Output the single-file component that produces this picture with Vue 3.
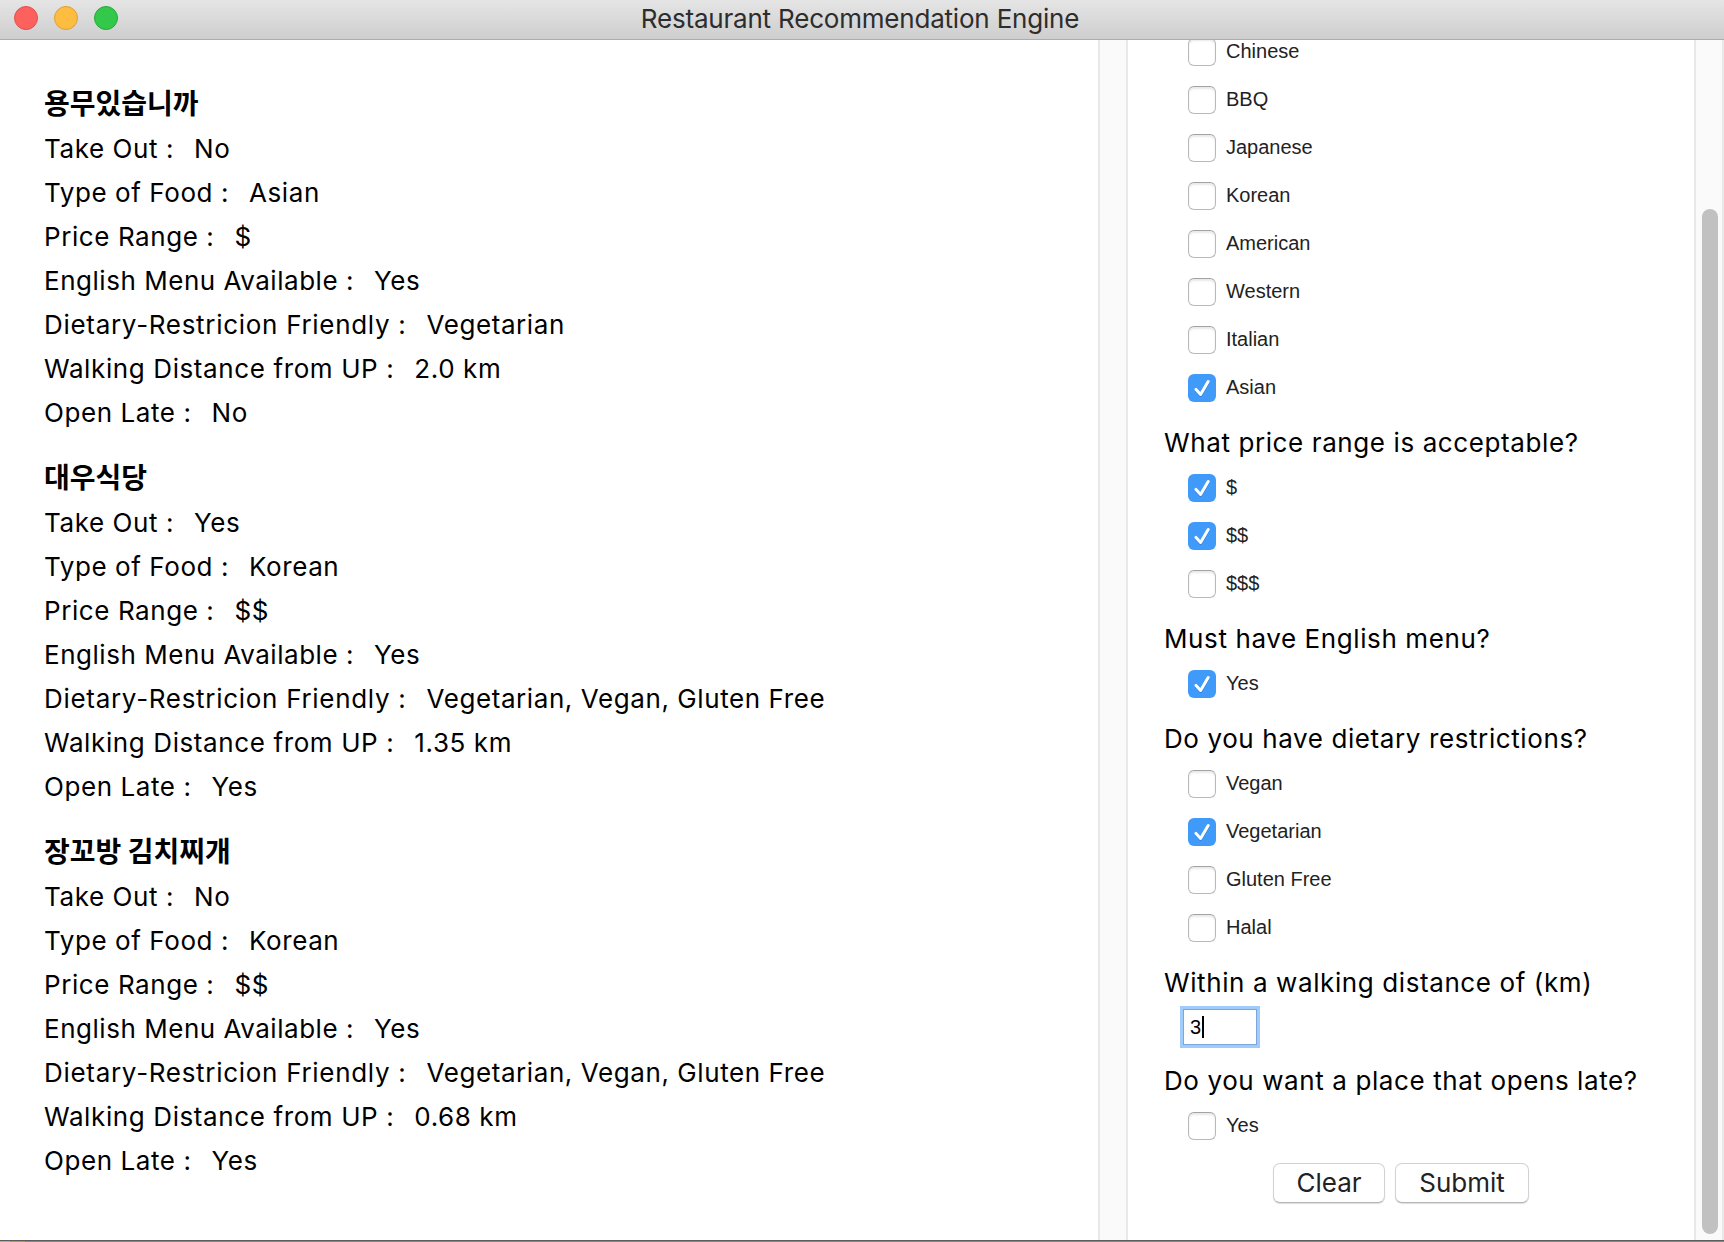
<script setup>
import { ref } from 'vue'

const restaurants = [
  {
    name: '용무있습니까',
    facts: [
      ['Take Out :', 'No'],
      ['Type of Food :', 'Asian'],
      ['Price Range :', '$'],
      ['English Menu Available :', 'Yes'],
      ['Dietary-Restricion Friendly :', 'Vegetarian'],
      ['Walking Distance from UP :', '2.0 km'],
      ['Open Late :', 'No'],
    ],
  },
  {
    name: '대우식당',
    facts: [
      ['Take Out :', 'Yes'],
      ['Type of Food :', 'Korean'],
      ['Price Range :', '$$'],
      ['English Menu Available :', 'Yes'],
      ['Dietary-Restricion Friendly :', 'Vegetarian, Vegan, Gluten Free'],
      ['Walking Distance from UP :', '1.35 km'],
      ['Open Late :', 'Yes'],
    ],
  },
  {
    name: '장꼬방 김치찌개',
    facts: [
      ['Take Out :', 'No'],
      ['Type of Food :', 'Korean'],
      ['Price Range :', '$$'],
      ['English Menu Available :', 'Yes'],
      ['Dietary-Restricion Friendly :', 'Vegetarian, Vegan, Gluten Free'],
      ['Walking Distance from UP :', '0.68 km'],
      ['Open Late :', 'Yes'],
    ],
  },
]

const opt = (label, checked = false) => ({ label, checked })

const questions = ref([
  {
    options: [
      opt('Chinese'), opt('BBQ'), opt('Japanese'), opt('Korean'),
      opt('American'), opt('Western'), opt('Italian'), opt('Asian', true),
    ],
  },
  { title: 'What price range is acceptable?', options: [opt('$', true), opt('$$', true), opt('$$$')] },
  { title: 'Must have English menu?', options: [opt('Yes', true)] },
  {
    title: 'Do you have dietary restrictions?',
    options: [opt('Vegan'), opt('Vegetarian', true), opt('Gluten Free'), opt('Halal')],
  },
  { title: 'Within a walking distance of (km)', value: '3' },
  { title: 'Do you want a place that opens late?', options: [opt('Yes')] },
])
</script>

<template>
  <div class="window">
    <header class="titlebar">
      <div class="lights">
        <span class="light close"></span>
        <span class="light minimize"></span>
        <span class="light zoom"></span>
      </div>
      <h1 class="title">Restaurant Recommendation Engine</h1>
    </header>

    <main class="body">
      <section class="results">
        <article v-for="r in restaurants" :key="r.name" class="restaurant">
          <h2 class="name">{{ r.name }}</h2>
          <p v-for="[label, value] in r.facts" :key="label" class="fact">
            <span class="key">{{ label }}</span><span class="value">{{ value }}</span>
          </p>
        </article>
      </section>

      <div class="gutter"></div>

      <aside class="form">
        <div v-for="(q, i) in questions" :key="i">
          <h3 v-if="q.title" class="question">{{ q.title }}</h3>
          <div v-for="o in q.options" :key="o.label" class="option" @click="o.checked = !o.checked">
            <span class="box" :class="{ checked: o.checked }">
              <svg v-if="o.checked" viewBox="0 0 28 28" width="28" height="28">
                <path d="M8 15.4 L12.6 20.4 L20.2 7.6" />
              </svg>
            </span>
            <span class="label">{{ o.label }}</span>
          </div>
          <div v-if="q.value" class="field-row">
            <div class="field"><span>{{ q.value }}</span><i class="caret"></i></div>
          </div>
        </div>
        <div class="actions">
          <button class="btn clear">Clear</button>
          <button class="btn submit">Submit</button>
        </div>
      </aside>

      <div class="scrollbar"><div class="thumb"></div></div>
    </main>
    <footer class="edge"></footer>
  </div>
</template>

<style>
body {
  margin: 0;
  overflow: hidden;
}
</style>

<style scoped>
.window {
  display: flex;
  flex-direction: column;
  width: 1724px;
  height: 1242px;
  overflow: hidden;
  background: #fff;
  color: #000;
  font-family: Inter, 'Noto Sans CJK KR', sans-serif;
  font-size: 26px;
}
h1, h2, h3, p {
  margin: 0;
  font-weight: 400;
  font-size: 26px;
}
.titlebar {
  box-sizing: border-box;
  flex: none;
  display: grid;
  grid-template-columns: 1fr auto 1fr;
  align-items: start;
  height: 40px;
  border-bottom: 1px solid #acacac;
  background: linear-gradient(#e5e5e5, #cecece);
}
.lights {
  display: flex;
  gap: 16px;
  padding: 6px 0 0 14px;
}
.light {
  box-sizing: border-box;
  width: 24px;
  height: 24px;
  border: 1px solid;
  border-radius: 50%;
}
.close { background: #fc615d; border-color: #e0504c; }
.minimize { background: #fdbd41; border-color: #df9f34; }
.zoom { background: #34c84a; border-color: #25aa36; }
.title {
  padding-right: 4px;
  color: #2d2d2d;
  line-height: 38px;
  letter-spacing: -0.2px;
  white-space: nowrap;
}
.body {
  flex: 1;
  display: flex;
  min-height: 0;
}
.results {
  box-sizing: border-box;
  width: 1098px;
  padding: 21px 0 0 44px;
}
.name {
  height: 66px;
  box-sizing: border-box;
  padding-top: 18px;
  line-height: 46px;
  font-family: 'Noto Sans CJK KR', sans-serif;
  font-size: 28px;
  font-weight: 700;
}
.fact {
  height: 44px;
  line-height: 44px;
  letter-spacing: 0.58px;
  white-space: nowrap;
}
.value { margin-left: 20px; }
/* Label tracking varies slightly with the row */
.fact:nth-of-type(4) .key { letter-spacing: 0.53px; }
.fact:nth-of-type(5) .key { letter-spacing: 0.7px; }
.fact:nth-of-type(6) .key { letter-spacing: 0.61px; }
.gutter {
  box-sizing: border-box;
  width: 30px;
  border: solid #e8e8e8;
  border-width: 0 2px;
  background: #fafafa;
}
.form {
  width: 566px;
  box-sizing: border-box;
  padding-left: 36px;
  margin-top: -12px;
  clip-path: inset(12px 0 0 0);
}
.question {
  height: 52px;
  box-sizing: border-box;
  padding-top: 9px;
  line-height: 43px;
  letter-spacing: 0.6px;
  white-space: nowrap;
}
.option {
  display: flex;
  height: 48px;
  box-sizing: border-box;
  padding: 10px 0 0 24px;
}
.box {
  box-sizing: border-box;
  width: 28px;
  height: 28px;
  border: 1px solid #b9b9b9;
  border-top-color: #a3a3a3;
  border-radius: 6px;
  box-shadow: inset 0 2px 2px #e9e9e9;
}
.box.checked {
  border: 0;
  background: #3f9afa;
  box-shadow: none;
}
.box svg {
  display: block;
  filter: drop-shadow(0 1px 0 rgba(0, 60, 150, 0.25));
}
.box path {
  fill: none;
  stroke: #fff;
  stroke-width: 3;
  stroke-linecap: round;
  stroke-linejoin: round;
}
.label {
  margin-left: 10px;
  color: #222;
  font: 20px/26px 'Liberation Sans', Arial, sans-serif;
}
.field-row {
  height: 46px;
  box-sizing: border-box;
  padding: 5px 0 0 19px;
}
.field {
  display: flex;
  align-items: center;
  box-sizing: border-box;
  width: 74px;
  height: 36px;
  padding-left: 6px;
  border: 1px solid #7ba5dc;
  box-shadow: 0 0 0 3px #9fccfb;
  font: 20px/34px 'Liberation Sans', Arial, sans-serif;
}
.caret {
  width: 2px;
  height: 22px;
  margin-left: 1px;
  background: #000;
}
.actions {
  display: flex;
  gap: 10px;
  padding: 13px 0 0 109px;
}
.btn {
  box-sizing: border-box;
  height: 40px;
  padding: 0;
  border: 1px solid #d2d2d2;
  border-bottom-color: #b5b5b5;
  border-radius: 7px;
  background: #fff;
  box-shadow: 0 1px 1px #dedede;
  color: #222;
  font: 26px/38px Inter, sans-serif;
}
.clear { width: 112px; }
.submit { width: 134px; }
.scrollbar {
  box-sizing: border-box;
  width: 30px;
  padding: 169px 4px 0 6px;
  border: solid #e8e8e8;
  border-width: 0 2px;
  background: #fafafa;
}
.thumb {
  width: 16px;
  height: 1025px;
  border-radius: 8px;
  background: #c1c1c1;
}
.edge {
  height: 2px;
  box-sizing: border-box;
  border-top: 1px solid #5c5c5c;
  background: linear-gradient(90deg, #aaa 10px, #a89c58 10px, #a89c58 25px, #858585 25px);
}
</style>
